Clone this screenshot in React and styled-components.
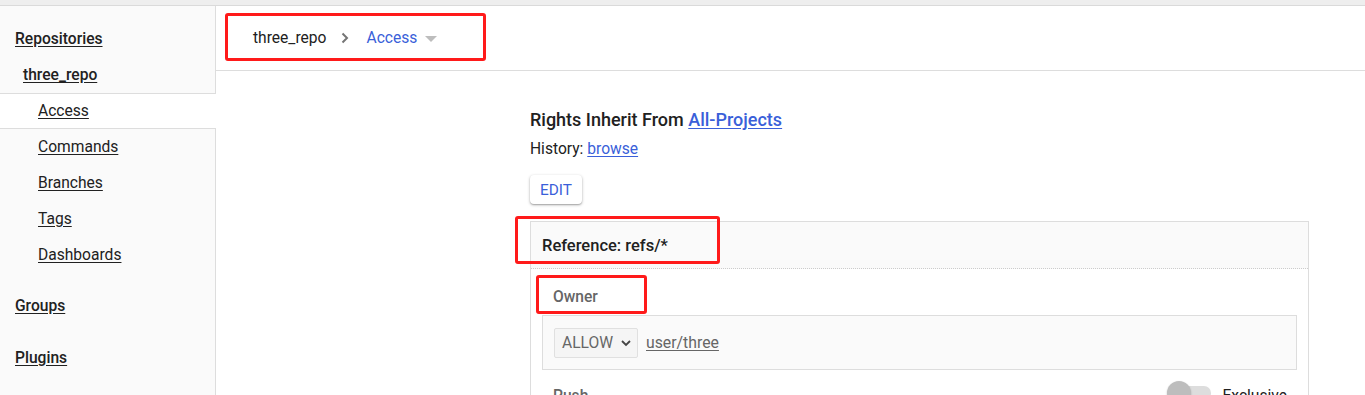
import React from "react";
import styled, { createGlobalStyle } from "styled-components";

const Global = createGlobalStyle`
  html, body { margin: 0; padding: 0; background: #fff; }
  body { font-family: Roboto, "Noto Sans", "Liberation Sans", sans-serif; color: #212121; overflow: hidden; }
  * { box-sizing: border-box; }
`;

const Page = styled.div`
  position: relative;
  width: 1365px;
  height: 395px;
  overflow: hidden;
  display: flex;
  flex-direction: column;
`;

const TopStrip = styled.div`
  height: 6px;
  background: #eeeeee;
  border-bottom: 1px solid #dadada;
  flex: none;
`;

const Body = styled.div`
  flex: 1;
  display: flex;
  min-height: 0;
`;

const Sidebar = styled.nav`
  width: 216px;
  flex: none;
  background: #fafafa;
  border-right: 1px solid #dddddd;
  padding-top: 15px;
`;

const NavSection = styled.div`
  margin-top: ${(p) => p.$gap || 0}px;
`;

const NavHeading = styled.a`
  display: flex;
  align-items: center;
  height: 36px;
  padding-left: ${(p) => p.$indent}px;
  font-size: 15.6px;
  font-weight: 500;
  color: #212121;
  text-decoration: underline;
  text-underline-offset: 2px;
`;

const NavItem = styled.a`
  display: flex;
  align-items: center;
  height: 36px;
  padding-left: 38px;
  font-size: 15.6px;
  color: #212121;
  text-decoration: underline;
  text-underline-offset: 2px;
  border-top: 1px solid ${(p) => (p.$selected ? "#dddddd" : "transparent")};
  border-bottom: 1px solid ${(p) => (p.$selected ? "#dddddd" : "transparent")};
  background: ${(p) => (p.$selected ? "#ffffff" : "transparent")};
  margin-right: -1px;
`;

const Main = styled.main`
  flex: 1;
  display: flex;
  flex-direction: column;
  min-width: 0;
`;

const Header = styled.header`
  height: 65px;
  flex: none;
  border-bottom: 1px solid #dddddd;
  display: flex;
  align-items: center;
  padding-left: 37px;
`;

const Crumb = styled.span`
  font-size: 15.6px;
  color: ${(p) => (p.$active ? "#3a5fd9" : "#212121")};
`;

const Chevron = styled.svg`
  margin: 0 17px 0 15px;
`;

const Caret = styled.span`
  width: 0;
  height: 0;
  border-left: 6px solid transparent;
  border-right: 6px solid transparent;
  border-top: 6px solid #bdbdbd;
  margin-left: 8px;
  margin-top: 1px;
`;

const Content = styled.section`
  padding: 37px 56px 0 314px;
`;

const InheritTitle = styled.h3`
  margin: 0;
  font-size: 18px;
  line-height: 24px;
  font-weight: 500;
  color: #212121;
`;

const Link = styled.a`
  color: #3a5fd9;
  text-decoration: underline;
  text-underline-offset: 2px;
`;

const History = styled.div`
  margin-top: 7px;
  font-size: 15.6px;
  line-height: 20px;
  color: #212121;
`;

const EditButton = styled.button`
  display: block;
  margin-top: 16px;
  height: 29px;
  padding: 0 10px;
  border: none;
  border-radius: 4px;
  background: #fff;
  color: #3a5fd9;
  font-family: inherit;
  font-size: 15.4px;
  box-shadow: 0 1px 3px rgba(0, 0, 0, 0.3), 0 1px 1px rgba(0, 0, 0, 0.14);
`;

const RefCard = styled.div`
  margin-top: 17px;
  border: 1px solid #dddddd;
  border-bottom: none;
`;

const RefHeader = styled.div`
  height: 47px;
  background: #fafafa;
  border-bottom: 1px dotted #cccccc;
  display: flex;
  align-items: center;
  padding-left: 11px;
  padding-top: 1px;
  font-size: 16.5px;
  font-weight: 500;
  color: #212121;
`;

const PermSection = styled.div`
  padding: 0 11px;
`;

const PermTitle = styled.div`
  height: 46px;
  display: flex;
  align-items: center;
  padding-left: 11px;
  padding-top: 9px;
  font-size: 15.6px;
  font-weight: 500;
  color: #666666;
`;

const RuleBox = styled.div`
  height: 55px;
  background: #fafafa;
  border: 1px solid #dddddd;
  display: flex;
  align-items: center;
  padding-left: 11px;
  gap: 8px;
`;

const Select = styled.div`
  width: 84px;
  height: 30px;
  border: 1px solid #e0e0e0;
  border-radius: 2px;
  background: #f5f5f5;
  display: flex;
  align-items: center;
  justify-content: space-between;
  padding: 0 5px 0 7px;
  font-size: 15.6px;
  color: #666666;
`;

const GroupLink = styled.a`
  font-size: 15.8px;
  color: #666666;
  text-decoration: underline;
  text-underline-offset: 2px;
`;

const NextRow = styled.div`
  display: flex;
  align-items: flex-start;
  justify-content: space-between;
  height: 60px;
  padding: 17px 10px 0 11px;
`;

const NextTitle = styled.span`
  font-size: 15.6px;
  line-height: 18px;
  font-weight: 500;
  color: #666666;
`;

const ToggleWrap = styled.div`
  display: flex;
  align-items: flex-start;
  gap: 11px;
  font-size: 15.6px;
  line-height: 18px;
  color: #212121;
`;

const Track = styled.div`
  position: relative;
  width: 36px;
  height: 14px;
  margin-top: -1px;
  border-radius: 7px;
  background: #dddddd;
  margin-left: 8px;
`;

const Knob = styled.div`
  position: absolute;
  left: -8px;
  top: -5px;
  width: 24px;
  height: 24px;
  border-radius: 50%;
  background: #bdbdbd;
  box-shadow: 0 1px 2px rgba(0, 0, 0, 0.25);
`;

const Annot = styled.div`
  position: absolute;
  left: ${(p) => p.$x}px;
  top: ${(p) => p.$y}px;
  width: ${(p) => p.$w}px;
  height: ${(p) => p.$h}px;
  border: 3px solid #ff1a1a;
  border-radius: 3px;
  pointer-events: none;
`;

export default function App() {
  return (
    <>
      <Global />
      <Page>
        <TopStrip />
        <Body>
          <Sidebar>
            <NavSection>
              <NavHeading $indent={15}>Repositories</NavHeading>
              <NavHeading $indent={23}>three_repo</NavHeading>
              <NavItem $selected>Access</NavItem>
              <NavItem>Commands</NavItem>
              <NavItem>Branches</NavItem>
              <NavItem>Tags</NavItem>
              <NavItem>Dashboards</NavItem>
            </NavSection>
            <NavSection $gap={15}>
              <NavHeading $indent={15}>Groups</NavHeading>
            </NavSection>
            <NavSection $gap={16}>
              <NavHeading $indent={15}>Plugins</NavHeading>
            </NavSection>
          </Sidebar>
          <Main>
            <Header>
              <Crumb>three_repo</Crumb>
              <Chevron width="8" height="12" viewBox="0 0 8 12">
                <path d="M1.5 1.5 L6 6 L1.5 10.5" fill="none" stroke="#757575" strokeWidth="2" />
              </Chevron>
              <Crumb $active>Access</Crumb>
              <Caret />
            </Header>
            <Content>
              <InheritTitle>
                Rights Inherit From <Link>All-Projects</Link>
              </InheritTitle>
              <History>
                History: <Link>browse</Link>
              </History>
              <EditButton>EDIT</EditButton>
              <RefCard>
                <RefHeader>Reference: refs/*</RefHeader>
                <PermSection>
                  <PermTitle>Owner</PermTitle>
                  <RuleBox>
                    <Select>
                      <span>ALLOW</span>
                      <svg width="12" height="8" viewBox="0 0 12 8">
                        <path d="M2 2 L6 6 L10 2" fill="none" stroke="#444" strokeWidth="1.8" />
                      </svg>
                    </Select>
                    <GroupLink>user/three</GroupLink>
                  </RuleBox>
                  <NextRow>
                    <NextTitle>Push</NextTitle>
                    <ToggleWrap>
                      <Track>
                        <Knob />
                      </Track>
                      <span>Exclusive</span>
                    </ToggleWrap>
                  </NextRow>
                </PermSection>
              </RefCard>
            </Content>
          </Main>
        </Body>
        <Annot $x={225} $y={13} $w={261} $h={48} />
        <Annot $x={515} $y={216} $w={205} $h={48} />
        <Annot $x={536} $y={275} $w={111} $h={39} />
      </Page>
    </>
  );
}
